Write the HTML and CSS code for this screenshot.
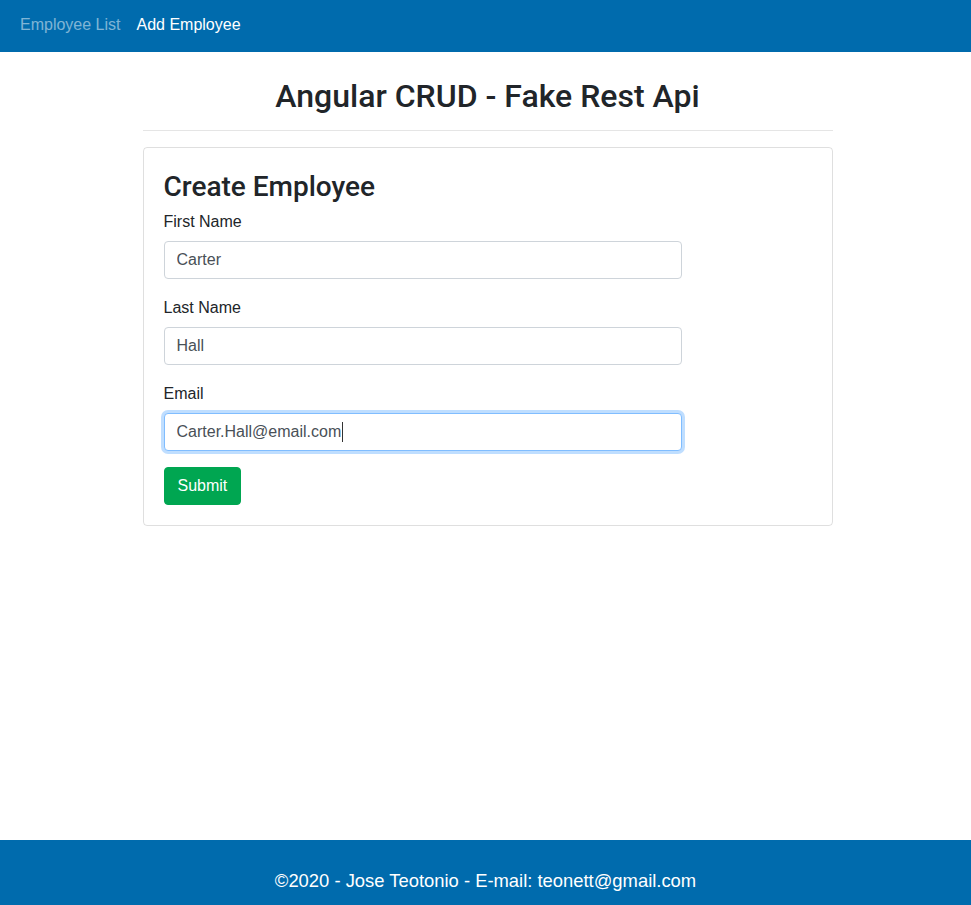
FILE: index.html
```html
<!DOCTYPE html>
<html lang="en">
<head>
<meta charset="utf-8">
<title>Angular CRUD - Fake Rest Api</title>
<link rel="stylesheet" href="styles.css">
</head>
<body>
<nav class="navbar">
  <a class="nav-link" href="#">Employee List</a>
  <a class="nav-link active" href="#">Add Employee</a>
</nav>
<main class="container">
  <h2 class="page-title">Angular CRUD - Fake Rest Api</h2>
  <hr class="divider">
  <div class="card">
    <h3 class="card-title">Create Employee</h3>
    <form class="form">
      <div class="form-group">
        <label class="label" for="fn">First Name</label>
        <input class="input" id="fn" type="text" value="Carter">
      </div>
      <div class="form-group">
        <label class="label" for="ln">Last Name</label>
        <input class="input" id="ln" type="text" value="Hall">
      </div>
      <div class="form-group">
        <label class="label" for="em">Email</label>
        <div class="input-wrap">
          <input class="input focused" id="em" type="text" value="Carter.Hall@email.com">
          <span class="caret"></span>
        </div>
      </div>
      <button class="btn" type="button">Submit</button>
    </form>
  </div>
</main>
<footer class="footer">©2020 - Jose Teotonio - E-mail: teonett@gmail.com</footer>
</body>
</html>
```
FILE: styles.css
```css
* { box-sizing: border-box; }
html, body { margin: 0; padding: 0; }
body {
  font-family: "Liberation Sans", Arial, sans-serif;
  font-size: 16px;
  line-height: 1.5;
  color: #212529;
  background: #fff;
  min-height: 100vh;
  display: flex;
  flex-direction: column;
}
.navbar {
  height: 52px;
  background: #006bad;
  display: flex;
  align-items: center;
  gap: 16px;
  padding: 0 20px 2px;
}
.nav-link {
  color: rgba(255,255,255,0.5);
  text-decoration: none;
  font-size: 16px;
}
.nav-link.active { color: #fff; }
.container {
  width: 690px;
  margin: 0 auto;
  position: relative;
  left: 2px;
}
.page-title {
  margin: 25px 0 0;
  font-family: Roboto, "Liberation Sans", sans-serif;
  font-size: 32px;
  font-weight: 500;
  line-height: 38px;
  text-align: center;
}
.divider {
  margin: 15px 0 16px;
  border: 0;
  border-top: 1px solid rgba(0,0,0,0.1);
}
.card {
  border: 1px solid rgba(0,0,0,0.125);
  border-radius: 4px;
  padding: 20px 20px 20px;
}
.card-title {
  margin: 0 0 6px;
  padding-top: 2px;
  font-family: Roboto, "Liberation Sans", sans-serif;
  font-size: 28px;
  font-weight: 500;
  line-height: 33px;
}
.form-group { margin-bottom: 16px; display: flex; flex-direction: column; align-items: flex-start; }
.label { margin: 1px 0 7px; font-size: 16px; line-height: 24px; }
.input-wrap { position: relative; }
.input {
  display: block;
  width: 518px;
  height: 38px;
  padding: 6px 12px;
  font-family: inherit;
  font-size: 16px;
  color: #495057;
  border: 1px solid #ced4da;
  border-radius: 4px;
  background: #fff;
  outline: none;
}
.input.focused {
  border-color: #80bdff;
  box-shadow: 0 0 0 3px rgba(0,123,255,0.25);
}
.caret {
  position: absolute;
  left: 178px;
  top: 9px;
  width: 1px;
  height: 20px;
  background: #333;
}
.btn {
  height: 38px;
  padding: 6px 13px;
  font-family: inherit;
  font-size: 16px;
  color: #fff;
  background: #00a651;
  border: 1px solid #00a651;
  border-radius: 4px;
}
.footer {
  margin-top: auto;
  height: 65px;
  background: #006bad;
  color: #fff;
  font-size: 18.4px;
  text-align: center;
  padding-top: 29px;
  line-height: 24px;
}
```
